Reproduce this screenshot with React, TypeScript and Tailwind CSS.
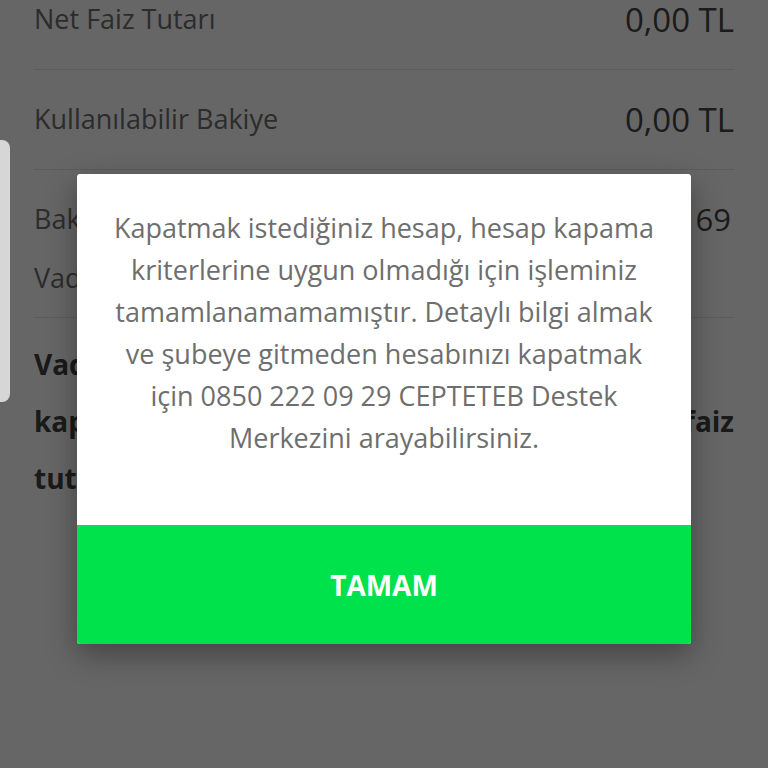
import React from "react";

const font = { fontFamily: "'Open Sans', Lato, sans-serif" };

const Row = ({ label, value }: { label: string; value: string }) => (
  <div className="flex h-[100px] items-center justify-between border-b border-[#e6e6e6]">
    <span className="text-[27px] text-[#6e6e6e]">{label}</span>
    <span className="text-[33px] font-medium text-[#454545]">{value}</span>
  </div>
);

const App = () => {
  return (
    <div className="relative h-[768px] w-[768px] overflow-hidden bg-white" style={font}>
      <div className="-mt-[30px] px-[34px]">
        <Row label="Net Faiz Tutarı" value="0,00 TL" />
        <Row label="Kullanılabilir Bakiye" value="0,00 TL" />
        <div className="flex h-[148px] flex-col justify-center gap-[22px] border-b border-[#e6e6e6]">
          <div className="flex items-center justify-between">
            <span className="text-[27px] text-[#6e6e6e]">Bakiye Tarihi</span>
            <span className="pr-[3px] text-[31px] font-medium text-[#454545]">1.2 69</span>
          </div>
          <span className="text-[27px] leading-none text-[#6e6e6e]">Vade Sonu</span>
        </div>
        <div className="flex flex-col pt-[18px] text-[28px] font-bold leading-[57px] text-[#414141]">
          <span>Vadesinden önce hesabınızı</span>
          <span className="[text-align-last:justify]">kapatmanız halinde birikmiş faiz</span>
          <span>tutarınızı kaybedersiniz.</span>
        </div>
      </div>

      <div className="absolute inset-0 bg-black/60" />

      <div className="absolute left-0 top-[140px] h-[262px] w-[10px] rounded-r-[8px] bg-[#d6d6d6]" />

      <div className="absolute inset-0 flex items-start justify-center pt-[174px]">
        <div className="flex w-[614px] flex-col overflow-hidden rounded-[3px] bg-white shadow-[0_10px_30px_rgba(0,0,0,0.35)]">
          <p className="px-2 pb-[66px] pt-[33px] text-center text-[27px] leading-[42px] text-[#6e6e6e]">
            Kapatmak istediğiniz hesap, hesap kapama
            <br />
            kriterlerine uygun olmadığı için işleminiz
            <br />
            tamamlanamamamıştır. Detaylı bilgi almak
            <br />
            ve şubeye gitmeden hesabınızı kapatmak
            <br />
            için 0850 222 09 29 CEPTETEB Destek
            <br />
            Merkezini arayabilirsiniz.
          </p>
          <button className="flex h-[119px] items-center justify-center bg-[#00e24b] text-[28px] font-bold text-white">
            TAMAM
          </button>
        </div>
      </div>
    </div>
  );
};

export default App;
